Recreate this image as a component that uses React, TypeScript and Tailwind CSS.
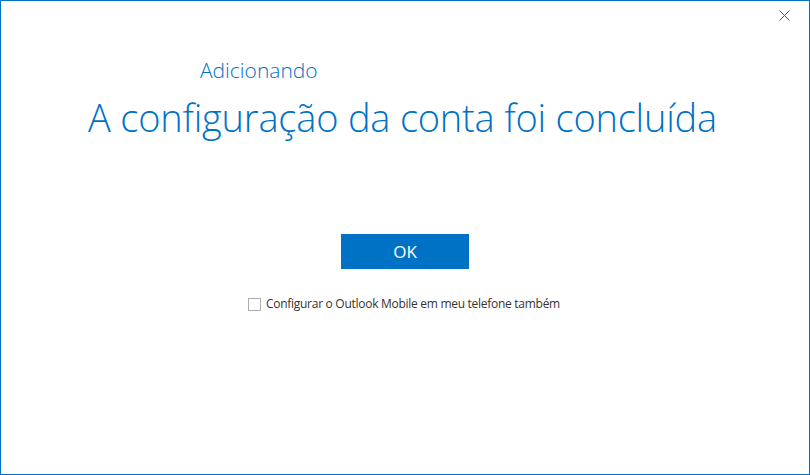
import React, { useState } from 'react';

const App: React.FC = () => {
  const [checked, setChecked] = useState(false);

  return (
    <div className="w-[810px] h-[475px] bg-white border border-[#0072c6] flex flex-col font-['Open_Sans',sans-serif]">
      <div className="flex justify-end h-[30px] pr-[19px] pt-[9px]">
        <button className="w-[11px] h-[11px] text-[#555]">
          <svg width="11" height="11" viewBox="0 0 11 11">
            <path d="M0.5 0.5 L10.5 10.5 M10.5 0.5 L0.5 10.5" stroke="currentColor" strokeWidth="1" />
          </svg>
        </button>
      </div>

      <div className="pl-[199px] pt-[27px] text-[21px] leading-[24px] font-light text-[#0072c6]">Adicionando</div>
      <div className="pl-[87px] pt-[10px] text-[38px] leading-[50px] font-light text-[#0072c6] tracking-[-0.2px]">
        A configuração da conta foi concluída
      </div>

      <div className="flex justify-center pt-[92px]">
        <button className="w-[128px] h-[35px] bg-[#0072c6] text-white text-[17px] font-normal">OK</button>
      </div>

      <label className="flex items-center gap-[5px] pl-[247px] pt-[26px] text-[12px] tracking-[-0.28px] text-[#333] cursor-pointer">
        <span
          onClick={() => setChecked(!checked)}
          className="w-[13px] h-[13px] border border-[#adadad] bg-white flex items-center justify-center text-[10px] leading-none text-[#0072c6]"
        >
          {checked ? '✓' : ''}
        </span>
        <span>Configurar o Outlook Mobile em meu telefone também</span>
      </label>
    </div>
  );
};

export default App;
